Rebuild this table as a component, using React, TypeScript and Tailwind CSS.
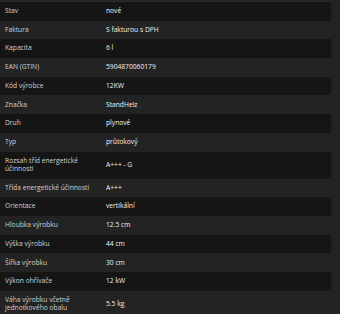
const rows: Array<[string, string]> = [
  ['Stav', 'nové'],
  ['Faktura', 'S fakturou s DPH'],
  ['Kapacita', '6 l'],
  ['EAN (GTIN)', '5904870060179'],
  ['Kód výrobce', '12KW'],
  ['Značka', 'StandHeiz'],
  ['Druh', 'plynové'],
  ['Typ', 'průtokový'],
  ['Rozsah tříd energetické účinnosti', 'A+++ - G'],
  ['Třída energetické účinnosti', 'A+++'],
  ['Orientace', 'vertikální'],
  ['Hloubka výrobku', '12.5 cm'],
  ['Výška výrobku', '44 cm'],
  ['Šířka výrobku', '30 cm'],
  ['Výkon ohřívače', '12 kW'],
  ['Váha výrobku včetně jednotkového obalu', '5.5 kg']
]

export default function App() {
  return (
    <div
      className="h-[314px] w-[340px] overflow-hidden bg-[#232323] pt-[1px]"
      style={{ fontFamily: '"Open Sans", "Noto Sans", sans-serif' }}
    >
      <div className="w-[332px] border-t border-[#2c2c2c]">
        {rows.map(([label, value], i) => (
          <div
            key={label}
            className={
              i % 2 === 0
                ? 'flex items-center bg-[#151515] py-[5.1px] text-[6.7px] leading-[8.5px] border-r border-[#202020]'
                : 'flex items-center bg-[#232323] py-[5.1px] text-[6.7px] leading-[8.5px]'
            }
          >
            <div className="w-[101px] shrink-0 px-[5px] text-[#d2d2d2]">{label}</div>
            <div className="flex-1 px-[5px] text-[#f2f2f2]">{value}</div>
          </div>
        ))}
      </div>
    </div>
  )
}
